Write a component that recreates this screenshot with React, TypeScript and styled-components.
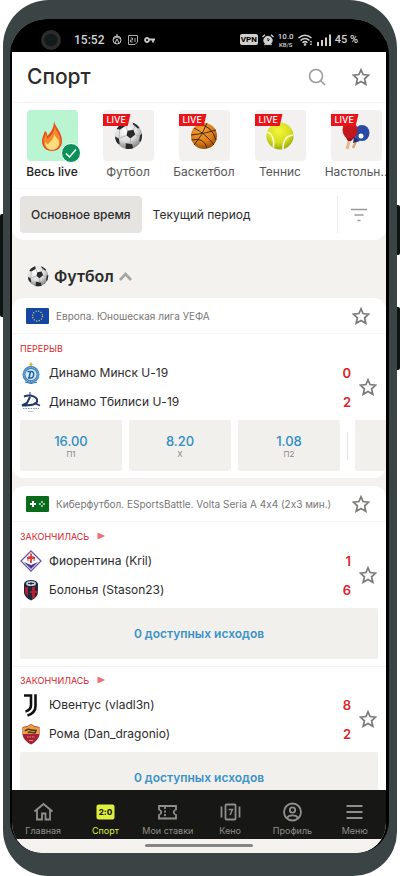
import React from "react";
import styled, { createGlobalStyle } from "styled-components";

const GlobalStyle = createGlobalStyle`
  * { box-sizing: border-box; }
  body {
    margin: 0;
    background: #fff;
    color: #2b2b2b;
    font-family: Inter, "Noto Sans", sans-serif;
    font-variant-ligatures: no-contextual;
  }
  button { font: inherit; font-variant-ligatures: inherit; color: inherit; border: 0; padding: 0; margin: 0; background: none; cursor: pointer; }
  h1, h2, p, ul { margin: 0; padding: 0; }
  svg { display: block; flex: none; }
`;

/* ---------- Phone body ---------- */
const Stage = styled.div`
  position: relative;
  height: 100vh;
  padding: 0 3px;
`;
const Body = styled.div`
  position: relative;
  height: 100%;
  padding: 19px 8px 23px 7px;
  background: #3b4444;
  border-radius: 46px 48px 44px 46px;
`;
const SideKey = styled.span<{ $side: "left" | "right"; $top: number; $length: number }>`
  position: absolute;
  ${(p) => p.$side}: 0;
  top: ${(p) => p.$top}px;
  width: 8px;
  height: ${(p) => p.$length}px;
  border-radius: 2px;
  background: #0d1413;
`;
const Glass = styled.div`
  height: 100%;
  padding: 0 3px 0 2px;
  background: #000;
  border-radius: 36px 36px 32px 32px;
  overflow: hidden;
`;
const Screen = styled.div`
  height: 100%;
  display: flex;
  flex-direction: column;
  background: #f3f2ee;
  border-radius: 0 0 30px 30px;
  overflow: hidden;
`;

/* ---------- Status bar ---------- */
const StatusBar = styled.div`
  flex: none;
  height: 33px;
  padding: 8px 28px 0 28px;
  display: flex;
  align-items: center;
  gap: 6px;
  background: #000;
  color: #d5d5d5;
  font-family: Roboto, sans-serif;
  font-size: 12px;
  font-weight: 500;
`;
const Clock = styled.span`
  margin-left: 6px;
  margin-right: 2px;
`;
const StatusRight = styled.div`
  margin-left: auto;
  display: flex;
  align-items: center;
  gap: 4px;
  font-size: 11px;
`;
const Vpn = styled.span`
  padding: 0 1px;
  border-radius: 2px;
  background: #cfcfcf;
  color: #000;
  font-size: 8px;
  line-height: 11px;
  font-weight: 700;
`;
const Speed = styled.span`
  display: flex;
  flex-direction: column;
  align-items: center;
  font-size: 8px;
  line-height: 9px;
  small {
    font-size: 6px;
    line-height: 7px;
  }
`;

/* ---------- Top panel ---------- */
const TopPanel = styled.header`
  flex: none;
  background: #fff;
  border-radius: 0 0 12px 12px;
`;
const TitleRow = styled.div`
  height: 51px;
  padding: 0 16px 0 15px;
  display: flex;
  align-items: center;
  gap: 26px;
  border-bottom: 1px solid #f3f3f3;
`;
const Title = styled.h1`
  flex: 1;
  font-size: 21px;
  line-height: 24px;
  font-weight: 500;
`;
const IconButton = styled.button`
  flex: none;
  display: grid;
  place-items: center;
`;
const Categories = styled.nav`
  padding: 7px 0 8px 2px;
  display: flex;
  overflow: hidden;
  border-bottom: 1px solid #f9f9f9;
`;
const Category = styled.button<{ $active?: boolean }>`
  flex: 0 0 76px;
  display: flex;
  flex-direction: column;
  align-items: center;
  gap: 3px;
  font-size: 12px;
  line-height: 16px;
  white-space: nowrap;
  color: ${(p) => (p.$active ? "#222" : "#555")};
  font-weight: ${(p) => (p.$active ? 500 : 400)};
`;
const Tile = styled.span<{ $active?: boolean }>`
  position: relative;
  width: 51px;
  height: 51px;
  display: grid;
  place-items: center;
  border-radius: 4px;
  background: ${(p) => (p.$active ? "#b9f5d0" : "#f2f1ef")};
`;
const LiveTag = styled.span`
  position: absolute;
  left: 0;
  top: 4px;
  width: 28px;
  padding-left: 4px;
  background: #e8141a;
  clip-path: polygon(0 0, 100% 0, 90% 100%, 0 100%);
  color: #fff;
  font-size: 9px;
  line-height: 12px;
  font-weight: 500;
  text-align: left;
`;
const CheckBadge = styled.span`
  position: absolute;
  right: -3px;
  bottom: -2px;
`;
const Periods = styled.div`
  padding: 7px 0 7px 8px;
  display: flex;
  align-items: stretch;
`;
const Period = styled.button<{ $active?: boolean }>`
  height: 37px;
  padding: 0 11px;
  border-radius: 4px;
  font-size: 12px;
  white-space: nowrap;
  background: ${(p) => (p.$active ? "#e5e4e1" : "transparent")};
  font-weight: ${(p) => (p.$active ? 500 : 400)};
`;
const FilterButton = styled.button`
  width: 49px;
  margin-left: auto;
  padding-right: 6px;
  display: grid;
  place-items: center;
  border-left: 1px solid #ededed;
`;

/* ---------- Event list ---------- */
const Feed = styled.main`
  flex: 1;
  min-height: 0;
  overflow: auto;
  scrollbar-width: none;
`;
const SportHeading = styled.h2`
  height: 58px;
  padding: 14px 0 0 15px;
  font-size: 16px;
  font-weight: 600;
`;
const SportToggle = styled.button`
  height: 44px;
  display: flex;
  align-items: center;
  gap: 5px;
`;
const League = styled.section`
  margin-bottom: 8px;
  background: #fff;
  border-radius: 12px;
  overflow: hidden;
`;
const LeagueHead = styled.header`
  height: 36px;
  padding: 0 16px 0 14px;
  display: flex;
  align-items: center;
  gap: 7px;
  border-bottom: 1px solid #f5f5f5;
`;
const LeagueName = styled.span`
  flex: 1;
  font-size: 10px;
  line-height: 14px;
  color: #777;
  white-space: nowrap;
`;
const Match = styled.article`
  padding: 6px 8px 7px;
  & + & {
    padding-top: 5px;
    border-top: 1px solid #f3f3f3;
  }
`;
const MatchStatus = styled.p`
  height: 16px;
  display: flex;
  align-items: center;
  gap: 8px;
  color: #d9242a;
  font-size: 9px;
`;
const MatchBody = styled.div`
  display: flex;
  align-items: center;
  gap: 8px;
  padding: 2px 1px 4px 0;
`;
const Teams = styled.ul`
  flex: 1;
  list-style: none;
`;
const Team = styled.li`
  height: 29px;
  display: flex;
  align-items: center;
  gap: 7px;
  font-size: 12px;
`;
const Score = styled.span`
  margin-left: auto;
  color: #d9242a;
  font-size: 13px;
  font-weight: 600;
`;
const OddsRow = styled.div`
  margin-right: -8px;
  display: flex;
  gap: 7px;
  align-items: center;
  overflow: hidden;
`;
const Odd = styled.button`
  flex: 0 0 102px;
  height: 51px;
  background: #f1f0ed;
  border-radius: 2px;
  color: #888;
  font-size: 8px;
  line-height: 10px;
  strong {
    display: block;
    color: #2f8dc6;
    font-size: 13px;
    line-height: 16px;
    font-weight: 500;
  }
`;
const OddDivider = styled.span`
  flex: none;
  width: 1px;
  height: 28px;
  background: #e3e3e3;
`;
const Outcomes = styled.button`
  width: 100%;
  height: 51px;
  background: #f1f0ed;
  border-radius: 2px;
  color: #3a93c8;
  font-size: 12px;
  font-weight: 600;
`;

/* ---------- Bottom navigation ---------- */
const TabBar = styled.nav`
  flex: none;
  height: 49px;
  display: flex;
  background: #171715;
`;
const TabLink = styled.a<{ $active?: boolean }>`
  flex: 1;
  display: flex;
  flex-direction: column;
  align-items: center;
  padding-top: 12px;
  gap: 3px;
  color: ${(p) => (p.$active ? "#dff03c" : "#8f8f8b")};
  font-size: 9px;
  line-height: 12px;
  text-decoration: none;
  white-space: nowrap;
`;
const GestureArea = styled.div`
  flex: none;
  height: 14px;
  display: flex;
  justify-content: center;
  padding-top: 5px;
  background: #f6f2f0;
  &::after {
    content: "";
    width: 29%;
    height: 3px;
    border-radius: 2px;
    background: #858585;
  }
`;

/* ---------- Drawings ---------- */
const Star = () => (
  <svg width="18" height="18" viewBox="0 0 18 18" fill="none" stroke="#7a7a78" strokeWidth="1.7" strokeLinejoin="miter">
    <path d="M9 1.8 11.1 6.5 16.6 7.1 12.6 10.8 13.8 16.3 9 13.5 4.2 16.3 5.4 10.8 1.4 7.1 6.9 6.5Z" />
  </svg>
);

const SoccerBall = ({ size }: { size: number }) => (
  <svg width={size} height={size} viewBox="0 0 30 30">
    <defs>
      <radialGradient id="ballShade" cx="0.4" cy="0.3" r="0.75">
        <stop offset="0" stopColor="#fff" />
        <stop offset="0.55" stopColor="#dcdcdc" />
        <stop offset="1" stopColor="#777" />
      </radialGradient>
      <clipPath id="ballClip"><circle cx="15" cy="15" r="14" /></clipPath>
    </defs>
    <circle cx="15" cy="15" r="14" fill="url(#ballShade)" />
    <g clipPath="url(#ballClip)" fill="#29292b">
      <path d="M14 10 20 9 22 14 17 18 13 15Z" />
      <path d="M4 4 11 1 12 5 6 9 2 8Z" />
      <path d="M19 0 27 6 25 8 20 4Z" />
      <path d="M1 16 5 18 6 24 0 22Z" />
      <path d="M12 23 19 24 20 30 12 30Z" />
      <path d="M27 15 30 12 30 22 26 21Z" />
    </g>
    <path d="M12 5 14 10M6 9 5 18M13 15 5 18M17 18 17 24M22 14 26 16M20 9 22 5M6 24 12 24M19 25 25 22" stroke="#a5a5a5" strokeWidth="0.8" fill="none" />
  </svg>
);

const Basketball = () => (
  <svg width="28" height="28" viewBox="0 0 28 28">
    <defs>
      <radialGradient id="basketShade" cx="0.4" cy="0.3" r="0.75">
        <stop offset="0" stopColor="#f5a63a" />
        <stop offset="0.6" stopColor="#dc7c17" />
        <stop offset="1" stopColor="#8f4508" />
      </radialGradient>
    </defs>
    <circle cx="14" cy="14" r="13" fill="url(#basketShade)" />
    <path d="M4 6Q15 11 24 23M1 13Q14 12 26 8M17 1Q13 13 4 23M9 2Q22 4 26 18M1.5 18Q14 15 17 26" fill="none" stroke="#4a260a" strokeWidth="1" />
  </svg>
);

const TennisBall = () => (
  <svg width="28" height="28" viewBox="0 0 28 28">
    <defs>
      <radialGradient id="tennisShade" cx="0.45" cy="0.3" r="0.75">
        <stop offset="0" stopColor="#f4f53b" />
        <stop offset="0.6" stopColor="#d5dd1c" />
        <stop offset="1" stopColor="#8fa00c" />
      </radialGradient>
    </defs>
    <circle cx="14" cy="14" r="13.5" fill="url(#tennisShade)" />
    <path d="M1.500 10Q9 13 7.500 25.500M27 13Q17 14 17 27" fill="none" stroke="#f7f9d8" strokeWidth="1.600" />
  </svg>
);

const Rackets = () => (
  <svg width="28" height="30" viewBox="0 0 28 30">
    <path d="M15 18 11 27" stroke="#d9a772" strokeWidth="2.500" />
    <path d="M8 17 5 28" stroke="#e3b98a" strokeWidth="3" />
    <path d="M12 15 18 20 11 22Z" fill="#1d3480" />
    <ellipse cx="20" cy="12" rx="7.500" ry="8" fill="#2849a8" />
    <path d="M3 15 14 15 9 20 6 20Z" fill="#8e0f14" />
    <ellipse cx="8" cy="9" rx="7.500" ry="9" fill="#c4161d" />
    <circle cx="19" cy="15" r="2.500" fill="#fff" />
  </svg>
);

const Flame = () => (
  <svg width="22" height="30" viewBox="0 0 22 30">
    <path d="M13 0C14 6 21 11 21 20C21 26 17 30 11 30C5 30 1 26 1 20C1 16 3 13 4 10C6 11 6 13 6.500 15C9 12 13 8 13 0Z" fill="#e8481c" />
    <path d="M13.500 4C14 9 19.500 13 19.500 20C19.500 25 16 28.500 11 28.500C6 28.500 2.500 25 2.500 20C2.500 17 4 15 4.500 13C6 15 6 17 6.500 18C10 14 14 11 13.500 4Z" fill="#f58a2c" />
    <path d="M13 13C14 16 18 18 18 22C18 26 15 29 11 29C7 29 4 26 4 21C5 22 6 23 7 23C10 20 13 18 13 13Z" fill="#fddc7c" />
  </svg>
);

const Check = () => (
  <svg width="20" height="20" viewBox="0 0 20 20">
    <circle cx="10" cy="10" r="9.500" fill="#0c9159" stroke="#fff" />
    <path d="M5 10.500 8.500 14 15 6.500" fill="none" stroke="#fff" strokeWidth="1.500" />
  </svg>
);

const EuFlag = () => (
  <svg width="23" height="16" viewBox="0 0 23 16">
    <rect width="23" height="16" rx="1" fill="#1546a5" />
    <circle cx="11.500" cy="8" r="5" fill="none" stroke="#c9c45a" strokeWidth="1.300" strokeDasharray="1.200 1.418" />
  </svg>
);

const CyberFlag = () => (
  <svg width="23" height="16" viewBox="0 0 23 16">
    <rect width="23" height="16" rx="1" fill="#0b6b1c" />
    <path d="M7 5V11M4 8H10" stroke="#fff" strokeWidth="2" />
    <g fill="#d7ead9">
      <circle cx="16" cy="6" r="0.900" /><circle cx="16" cy="10" r="0.900" />
      <circle cx="14" cy="8" r="0.900" /><circle cx="18" cy="8" r="0.900" />
    </g>
  </svg>
);

const MinskCrest = () => (
  <svg width="22" height="22" viewBox="0 0 22 22">
    <path d="M11 0 12 1.500 13 2 12 4 10 4 9 2 10 1.500Z" fill="#d8b84c" />
    <circle cx="11" cy="12.500" r="8.500" fill="#3f86c0" />
    <circle cx="11" cy="12.500" r="7" fill="none" stroke="#a9cbe6" strokeWidth="1" strokeDasharray="1 1" />
    <circle cx="11" cy="12.500" r="5.500" fill="#d9e9f5" />
    <path d="M8 16H11C14 16 15 9.500 11.500 9.500H7.500M10.500 9.500 9 16" fill="none" stroke="#1d63a8" strokeWidth="1.500" />
    <path d="M5 20 11 21.500 17 20" stroke="#2a6da9" fill="none" />
  </svg>
);

const TbilisiCrest = () => (
  <svg width="22" height="22" viewBox="0 0 22 22">
    <path d="M10 1V5" stroke="#253f74" strokeWidth="1" />
    <path d="M4 5.500C11 3 18 6 17 10.500C16.500 13.500 11 14.500 2 14.500L7 12 10 6" fill="none" stroke="#1d376e" strokeWidth="2" />
    <path d="M14 12 20 14.500" stroke="#1d376e" strokeWidth="1.500" />
    <path d="M3 17.500H19" stroke="#8b97b2" strokeWidth="1" strokeDasharray="1.500 1" />
    <path d="M8 20.500H13" stroke="#b9c1d2" strokeWidth="1" />
  </svg>
);

const FiorentinaCrest = () => (
  <svg width="22" height="22" viewBox="0 0 22 22">
    <path d="M11 1 21 11 11 21 1 11Z" fill="#fff" stroke="#6b57a5" strokeWidth="1.300" />
    <path d="M4 12 11 15 18 12 11 19Z" fill="#4b3493" />
    <path d="M11 3.500V13M7 8H15" stroke="#df3b34" strokeWidth="1.800" />
    <path d="M8 11Q7 5 11 7Q15 5 14 11" fill="none" stroke="#df3b34" strokeWidth="1" />
  </svg>
);

const BolognaCrest = () => (
  <svg width="22" height="22" viewBox="0 0 22 22">
    <path d="M4 5Q5 1 11 1Q17 1 18 5V14Q17 19 11 21.500Q5 19 4 14Z" fill="#1c2742" />
    <path d="M5 8H8V18L5 14ZM12 8H15V19L12 20Z" fill="#b3202d" />
    <ellipse cx="11" cy="4.500" rx="5" ry="2.600" fill="#c6cad3" />
    <path d="M8 4.500H14M11 3V6" stroke="#1c2742" strokeWidth="1" />
    <path d="M10 13H18" stroke="#b3202d" strokeWidth="2" />
  </svg>
);

const JuventusCrest = () => (
  <svg width="22" height="24" viewBox="0 0 22 24">
    <path d="M4 2.500H11V12Q11 17 5.500 18.500" fill="none" stroke="#111" strokeWidth="2.600" />
    <path d="M15.500 1.200V13Q15.500 20 7.500 22.500" fill="none" stroke="#111" strokeWidth="2.600" />
  </svg>
);

const RomaCrest = () => (
  <svg width="22" height="22" viewBox="0 0 22 22">
    <path d="M2.500 4Q7 4 11 1Q15 4 19.500 4V12Q18 18 11 21.500Q4 18 2.500 12Z" fill="#a51f36" />
    <path d="M3 4.500Q8 4 11 1.500Q14 4 19 4.500V11H3Z" fill="#e9a23a" />
    <path d="M5 8Q8 5 11 7L16 7.500 15 10 9 9 8 10" fill="none" stroke="#4a3320" strokeWidth="1.500" />
    <path d="M7 14H15" stroke="#e9a07a" strokeWidth="1" strokeDasharray="1.500 1" />
    <path d="M9 17.500H13" stroke="#d98f6a" strokeWidth="1" />
  </svg>
);

const PlayMark = () => (
  <svg width="8" height="8" viewBox="0 0 8 8"><path d="M0.500 0.500 8 4 0.500 7.500Z" fill="#f26b6d" /></svg>
);

type NavIcon = "home" | "sport" | "ticket" | "keno" | "profile" | "menu";
const navDrawings: Record<NavIcon, React.ReactNode> = {
  home: <path d="M1.500 9.500 10.500 2 19.500 9.500M4 8V17.500H9V11.500H12.500V17.500H17V8" />,
  sport: (
    <>
      <rect x="1.500" y="2.500" width="18" height="15" rx="2" fill="#dff03c" stroke="none" />
      <text x="10.500" y="13" textAnchor="middle" fill="#171715" stroke="none" fontFamily="Inter, sans-serif" fontSize="8" fontWeight="800">2:0</text>
    </>
  ),
  ticket: (
    <>
      <path d="M2 4H19V7.500C16 8.500 16 12 19 13V16.500H2V13C5 12 5 8.500 2 7.500Z" />
      <path d="M8 5V16" strokeDasharray="2 1.500" />
    </>
  ),
  keno: (
    <>
      <rect x="5.500" y="2.500" width="10" height="15" rx="1" />
      <path d="M1.500 4.500V15.500M19.500 4.500V15.500" />
      <path d="M8.500 7.500H12.500L10 13" strokeWidth="1.500" />
    </>
  ),
  profile: (
    <>
      <circle cx="10.500" cy="10" r="8.500" />
      <circle cx="10.500" cy="8" r="2.700" />
      <path d="M5.500 16C6 12.500 15 12.500 15.500 16" />
    </>
  ),
  menu: <path d="M2.500 4H18.500M2.500 10H18.500M2.500 16H18.500" />,
};
const NavGlyph = ({ name }: { name: NavIcon }) => (
  <svg width="21" height="20" viewBox="0 0 21 20" fill="none" stroke="currentColor" strokeWidth="1.800">
    {navDrawings[name]}
  </svg>
);

/* ---------- Data ---------- */
const categories = [
  { label: "Весь live", icon: <Flame />, active: true },
  { label: "Футбол", icon: <SoccerBall size={29} /> },
  { label: "Баскетбол", icon: <Basketball /> },
  { label: "Теннис", icon: <TennisBall /> },
  { label: "Настольн..", icon: <Rackets /> },
];

interface Side { name: string; score: number; crest: React.ReactNode }
interface MatchData { status: string; live?: boolean; sides: Side[]; odds?: [string, string][] }
const leagues: { name: string; flag: React.ReactNode; matches: MatchData[] }[] = [
  {
    name: "Европа. Юношеская лига УЕФА",
    flag: <EuFlag />,
    matches: [
      {
        status: "ПЕРЕРЫВ",
        sides: [
          { name: "Динамо Минск U-19", score: 0, crest: <MinskCrest /> },
          { name: "Динамо Тбилиси U-19", score: 2, crest: <TbilisiCrest /> },
        ],
        odds: [["16.00", "П1"], ["8.20", "X"], ["1.08", "П2"]],
      },
    ],
  },
  {
    name: "Киберфутбол. ESportsBattle. Volta Seria A 4x4 (2x3 мин.)",
    flag: <CyberFlag />,
    matches: [
      {
        status: "ЗАКОНЧИЛАСЬ",
        live: true,
        sides: [
          { name: "Фиорентина (Kril)", score: 1, crest: <FiorentinaCrest /> },
          { name: "Болонья (Stason23)", score: 6, crest: <BolognaCrest /> },
        ],
      },
      {
        status: "ЗАКОНЧИЛАСЬ",
        live: true,
        sides: [
          { name: "Ювентус (vladl3n)", score: 8, crest: <JuventusCrest /> },
          { name: "Рома (Dan_dragonio)", score: 2, crest: <RomaCrest /> },
        ],
      },
    ],
  },
];

const tabs: { label: string; icon: NavIcon; active?: boolean }[] = [
  { label: "Главная", icon: "home" },
  { label: "Спорт", icon: "sport", active: true },
  { label: "Мои ставки", icon: "ticket" },
  { label: "Кено", icon: "keno" },
  { label: "Профиль", icon: "profile" },
  { label: "Меню", icon: "menu" },
];

const MatchCard = ({ match }: { match: MatchData }) => (
  <Match>
    <MatchStatus>{match.status}{match.live && <PlayMark />}</MatchStatus>
    <MatchBody>
      <Teams>
        {match.sides.map((s) => (
          <Team key={s.name}>{s.crest}<span>{s.name}</span><Score>{s.score}</Score></Team>
        ))}
      </Teams>
      <IconButton aria-label="Матч в избранное"><Star /></IconButton>
    </MatchBody>
    {match.odds ? (
      <OddsRow>
        {match.odds.map(([value, label]) => (
          <Odd key={label}><strong>{value}</strong>{label}</Odd>
        ))}
        <OddDivider />
        <Odd aria-label="Другие исходы" />
      </OddsRow>
    ) : (
      <Outcomes>0 доступных исходов</Outcomes>
    )}
  </Match>
);

export default function App() {
  return (
    <Stage>
      <GlobalStyle />
      <SideKey $side="left" $top={214} $length={103} />
      <SideKey $side="right" $top={205} $length={50} />
      <SideKey $side="right" $top={307} $length={63} />
      <Body>
        <Glass>
          <Screen>
            <StatusBar>
              <svg width="22" height="22" viewBox="0 0 22 22">
                <circle cx="11" cy="11" r="10" fill="#2b2d2d" />
                <circle cx="11" cy="11" r="6.500" fill="#151919" />
                <circle cx="11" cy="10" r="2" fill="#0a2224" />
              </svg>
              <Clock>15:52</Clock>
              <svg width="10" height="11" viewBox="0 0 10 11" fill="none" stroke="#c9c9c9">
                <circle cx="5" cy="6" r="4" /><path d="M1 5 5 3 9 5M3 9 5 5 7 9M5 0V3" />
              </svg>
              <svg width="10" height="10" viewBox="0 0 10 10" fill="none" stroke="#a9a9a9">
                <path d="M0.500 0.500H9.500V7L7 9.500H0.500Z" /><path d="M2.500 3H4.500V5H2.500V7H4.500M7 3V7" />
              </svg>
              <svg width="11" height="8" viewBox="0 0 11 8" fill="none" stroke="#c9c9c9" strokeWidth="1.800">
                <circle cx="3" cy="4" r="2" /><path d="M5 3.500H11M9 4V6.500" />
              </svg>
              <StatusRight>
                <Vpn>VPN</Vpn>
                <svg width="12" height="12" viewBox="0 0 12 12" fill="none" stroke="#d0d0d0">
                  <circle cx="6" cy="6.500" r="4.200" fill="#d0d0d0" /><path d="M0.500 3 3 0.800M9 0.800 11.500 3M2.500 11 3.500 10M9.500 11 8.500 10" strokeWidth="1.400" />
                  <path d="M6 4V7L7.500 5.500" stroke="#000" strokeWidth="0.900" />
                </svg>
                <Speed><span>10.0</span><small>KB/S</small></Speed>
                <svg width="15" height="12" viewBox="0 0 15 12" fill="none" stroke="#cfcfcf" strokeWidth="1.500">
                  <path d="M0.500 4Q7 -1.500 13.500 4M2.500 6.500Q7 2.500 11.500 6.500M4.500 8.800Q7 6.500 9.500 8.800" /><circle cx="7" cy="10.500" r="0.600" /><path d="M13 7V11.500" strokeDasharray="1.500 1" />
                </svg>
                <svg width="14" height="12" viewBox="0 0 14 12" fill="#cfcfcf">
                  <path d="M0 8H2V12H0ZM4 6H6V12H4ZM8 3.500H10V12H8ZM12 0.500H14V12H12Z" />
                </svg>
                <span>45 %</span>
              </StatusRight>
            </StatusBar>

            <TopPanel>
              <TitleRow>
                <Title>Спорт</Title>
                <IconButton aria-label="Поиск">
                  <svg width="18" height="18" viewBox="0 0 18 18" fill="none" stroke="#999" strokeWidth="1.500">
                    <circle cx="8" cy="8" r="6.500" /><path d="M12.500 12.500 17 17" />
                  </svg>
                </IconButton>
                <IconButton aria-label="Избранное"><Star /></IconButton>
              </TitleRow>
              <Categories>
                {categories.map((c) => (
                  <Category key={c.label} $active={c.active}>
                    <Tile $active={c.active}>
                      {c.icon}
                      {c.active ? <CheckBadge><Check /></CheckBadge> : <LiveTag>LIVE</LiveTag>}
                    </Tile>
                    {c.label}
                  </Category>
                ))}
              </Categories>
              <Periods>
                <Period $active>Основное время</Period>
                <Period>Текущий период</Period>
                <FilterButton aria-label="Фильтр">
                  <svg width="16" height="14" viewBox="0 0 16 14" stroke="#9a9a98" strokeWidth="1.500">
                    <path d="M0 1.500H16M3.500 7H12.500M6.500 12.500H9.500" />
                  </svg>
                </FilterButton>
              </Periods>
            </TopPanel>

            <Feed>
              <SportHeading>
                <SportToggle aria-expanded="true">
                  <SoccerBall size={22} />
                  Футбол
                  <svg width="13" height="9" viewBox="0 0 13 9" fill="none" stroke="#a5a5a2" strokeWidth="2.600">
                    <path d="M1 8 6.500 2 12 8" />
                  </svg>
                </SportToggle>
              </SportHeading>
              {leagues.map((l) => (
                <League key={l.name}>
                  <LeagueHead>
                    {l.flag}
                    <LeagueName>{l.name}</LeagueName>
                    <IconButton aria-label="Лига в избранное"><Star /></IconButton>
                  </LeagueHead>
                  {l.matches.map((m) => <MatchCard key={m.sides[0].name} match={m} />)}
                </League>
              ))}
            </Feed>

            <TabBar>
              {tabs.map((t) => (
                <TabLink key={t.label} href="#" $active={t.active}>
                  <NavGlyph name={t.icon} />
                  {t.label}
                </TabLink>
              ))}
            </TabBar>
            <GestureArea />
          </Screen>
        </Glass>
      </Body>
    </Stage>
  );
}
